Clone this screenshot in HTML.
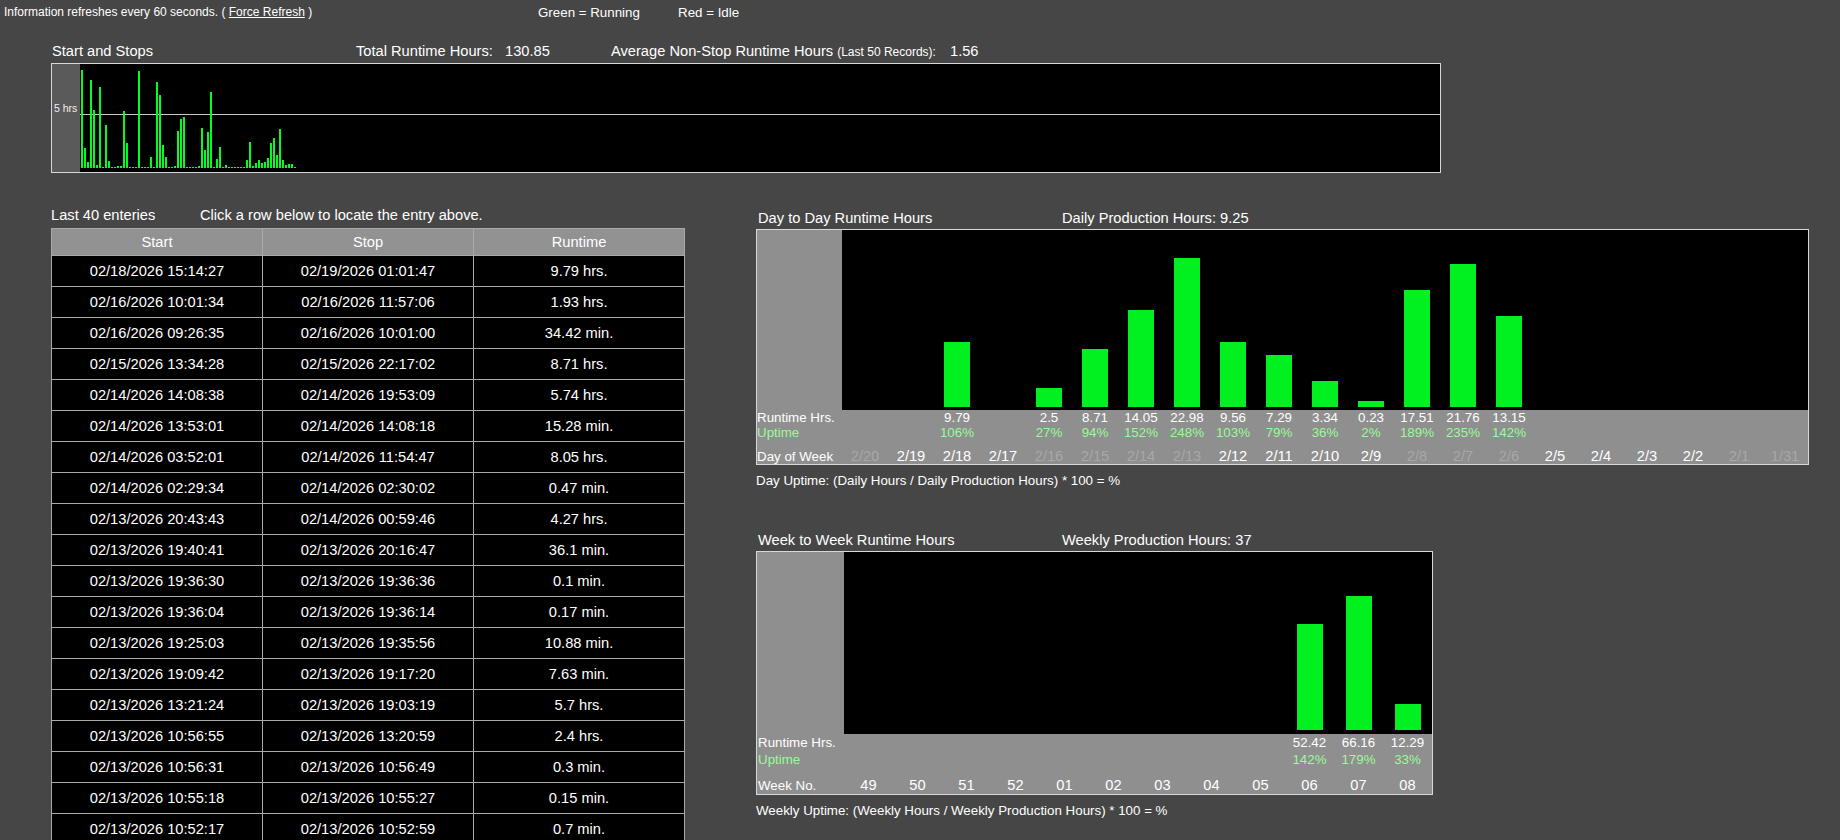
<!DOCTYPE html><html><head><meta charset="utf-8"><style>
html,body{margin:0;padding:0;background:#464646;width:1840px;height:840px;overflow:hidden;}
body{position:relative;font-family:"Liberation Sans",sans-serif;color:#fff;}
.t{position:absolute;white-space:nowrap;}
.b{position:absolute;}
</style></head><body>
<div class="t" style="left:4px;top:5.84px;font-size:12px;line-height:12px;color:#fff;">Information refreshes every 60 seconds. ( <span style="text-decoration:underline">Force Refresh</span> )</div>
<div class="t" style="left:538px;top:5.72px;font-size:13.33px;line-height:13.33px;color:#fff;">Green = Running</div>
<div class="t" style="left:678px;top:5.72px;font-size:13.33px;line-height:13.33px;color:#fff;">Red = Idle</div>
<div class="t" style="left:52px;top:43.58px;font-size:14.67px;line-height:14.67px;color:#fff;">Start and Stops</div>
<div class="t" style="left:356px;top:43.58px;font-size:14.67px;line-height:14.67px;color:#fff;">Total Runtime Hours:</div>
<div class="t" style="left:505px;top:43.58px;font-size:14.67px;line-height:14.67px;color:#fff;">130.85</div>
<div class="t" style="left:611px;top:43.58px;font-size:14.67px;line-height:14.67px;color:#fff;">Average Non-Stop Runtime Hours <span style="font-size:12px;letter-spacing:0">(Last 50 Records):</span></div>
<div class="t" style="left:950px;top:43.58px;font-size:14.67px;line-height:14.67px;color:#fff;">1.56</div>
<div class="b" style="left:51px;top:63px;width:1388px;height:108px;border:1px solid #d8d8d8;background:#000"></div>
<div class="b" style="left:52px;top:64px;width:28px;height:108px;background:#5a5a5a"></div>
<div class="b" style="left:80px;top:114px;width:1360px;height:1px;background:#c8c8c8"></div>
<div class="t" style="left:54px;top:103.11px;font-size:10.5px;line-height:10.5px;color:#f0f0f0;">5 hrs</div>
<div class="b" style="left:81px;top:70px;width:2px;height:98px;background:#00ff20"></div>
<div class="b" style="left:84px;top:148px;width:2px;height:20px;background:#00ff20"></div>
<div class="b" style="left:87px;top:162px;width:2px;height:6px;background:#00ff20"></div>
<div class="b" style="left:90px;top:80px;width:2px;height:88px;background:#00ff20"></div>
<div class="b" style="left:93px;top:110px;width:2px;height:58px;background:#00ff20"></div>
<div class="b" style="left:96px;top:165px;width:2px;height:3px;background:#00ff20"></div>
<div class="b" style="left:99px;top:87px;width:2px;height:81px;background:#00ff20"></div>
<div class="b" style="left:102px;top:167px;width:2px;height:1px;background:#00ff20"></div>
<div class="b" style="left:105px;top:125px;width:2px;height:43px;background:#00ff20"></div>
<div class="b" style="left:108px;top:161px;width:2px;height:7px;background:#00ff20"></div>
<div class="b" style="left:111px;top:167px;width:2px;height:1px;background:#00ff20"></div>
<div class="b" style="left:114px;top:167px;width:2px;height:1px;background:#00ff20"></div>
<div class="b" style="left:117px;top:166px;width:2px;height:2px;background:#00ff20"></div>
<div class="b" style="left:120px;top:166px;width:2px;height:2px;background:#00ff20"></div>
<div class="b" style="left:123px;top:111px;width:2px;height:57px;background:#00ff20"></div>
<div class="b" style="left:126px;top:143px;width:2px;height:25px;background:#00ff20"></div>
<div class="b" style="left:129px;top:167px;width:2px;height:1px;background:#00ff20"></div>
<div class="b" style="left:132px;top:167px;width:2px;height:1px;background:#00ff20"></div>
<div class="b" style="left:135px;top:167px;width:2px;height:1px;background:#00ff20"></div>
<div class="b" style="left:138px;top:71px;width:2px;height:97px;background:#00ff20"></div>
<div class="b" style="left:141px;top:167px;width:2px;height:1px;background:#00ff20"></div>
<div class="b" style="left:144px;top:167px;width:2px;height:1px;background:#00ff20"></div>
<div class="b" style="left:147px;top:167px;width:2px;height:1px;background:#00ff20"></div>
<div class="b" style="left:150px;top:157px;width:2px;height:11px;background:#00ff20"></div>
<div class="b" style="left:153px;top:167px;width:2px;height:1px;background:#00ff20"></div>
<div class="b" style="left:156px;top:82px;width:2px;height:86px;background:#00ff20"></div>
<div class="b" style="left:159px;top:95px;width:2px;height:73px;background:#00ff20"></div>
<div class="b" style="left:162px;top:145px;width:2px;height:23px;background:#00ff20"></div>
<div class="b" style="left:165px;top:157px;width:2px;height:11px;background:#00ff20"></div>
<div class="b" style="left:168px;top:167px;width:2px;height:1px;background:#00ff20"></div>
<div class="b" style="left:171px;top:167px;width:2px;height:1px;background:#00ff20"></div>
<div class="b" style="left:174px;top:166px;width:2px;height:2px;background:#00ff20"></div>
<div class="b" style="left:177px;top:131px;width:2px;height:37px;background:#00ff20"></div>
<div class="b" style="left:180px;top:119px;width:2px;height:49px;background:#00ff20"></div>
<div class="b" style="left:183px;top:117px;width:2px;height:51px;background:#00ff20"></div>
<div class="b" style="left:186px;top:167px;width:2px;height:1px;background:#00ff20"></div>
<div class="b" style="left:189px;top:167px;width:2px;height:1px;background:#00ff20"></div>
<div class="b" style="left:192px;top:167px;width:2px;height:1px;background:#00ff20"></div>
<div class="b" style="left:195px;top:167px;width:2px;height:1px;background:#00ff20"></div>
<div class="b" style="left:198px;top:166px;width:2px;height:2px;background:#00ff20"></div>
<div class="b" style="left:201px;top:128px;width:2px;height:40px;background:#00ff20"></div>
<div class="b" style="left:204px;top:150px;width:2px;height:18px;background:#00ff20"></div>
<div class="b" style="left:207px;top:132px;width:2px;height:36px;background:#00ff20"></div>
<div class="b" style="left:210px;top:92px;width:2px;height:76px;background:#00ff20"></div>
<div class="b" style="left:213px;top:167px;width:2px;height:1px;background:#00ff20"></div>
<div class="b" style="left:216px;top:159px;width:2px;height:9px;background:#00ff20"></div>
<div class="b" style="left:219px;top:147px;width:2px;height:21px;background:#00ff20"></div>
<div class="b" style="left:222px;top:167px;width:2px;height:1px;background:#00ff20"></div>
<div class="b" style="left:225px;top:165px;width:2px;height:3px;background:#00ff20"></div>
<div class="b" style="left:228px;top:167px;width:2px;height:1px;background:#00ff20"></div>
<div class="b" style="left:231px;top:167px;width:2px;height:1px;background:#00ff20"></div>
<div class="b" style="left:234px;top:167px;width:2px;height:1px;background:#00ff20"></div>
<div class="b" style="left:237px;top:167px;width:2px;height:1px;background:#00ff20"></div>
<div class="b" style="left:240px;top:167px;width:2px;height:1px;background:#00ff20"></div>
<div class="b" style="left:243px;top:167px;width:2px;height:1px;background:#00ff20"></div>
<div class="b" style="left:246px;top:160px;width:2px;height:8px;background:#00ff20"></div>
<div class="b" style="left:249px;top:142px;width:2px;height:26px;background:#00ff20"></div>
<div class="b" style="left:252px;top:166px;width:2px;height:2px;background:#00ff20"></div>
<div class="b" style="left:255px;top:163px;width:2px;height:5px;background:#00ff20"></div>
<div class="b" style="left:258px;top:160px;width:2px;height:8px;background:#00ff20"></div>
<div class="b" style="left:261px;top:163px;width:2px;height:5px;background:#00ff20"></div>
<div class="b" style="left:264px;top:162px;width:2px;height:6px;background:#00ff20"></div>
<div class="b" style="left:267px;top:158px;width:2px;height:10px;background:#00ff20"></div>
<div class="b" style="left:270px;top:143px;width:2px;height:25px;background:#00ff20"></div>
<div class="b" style="left:273px;top:138px;width:2px;height:30px;background:#00ff20"></div>
<div class="b" style="left:276px;top:155px;width:2px;height:13px;background:#00ff20"></div>
<div class="b" style="left:279px;top:129px;width:2px;height:39px;background:#00ff20"></div>
<div class="b" style="left:282px;top:160px;width:2px;height:8px;background:#00ff20"></div>
<div class="b" style="left:285px;top:165px;width:2px;height:3px;background:#00ff20"></div>
<div class="b" style="left:288px;top:164px;width:2px;height:4px;background:#00ff20"></div>
<div class="b" style="left:291px;top:164px;width:2px;height:4px;background:#00ff20"></div>
<div class="b" style="left:294px;top:167px;width:2px;height:1px;background:#00ff20"></div>
<div class="t" style="left:51px;top:207.58px;font-size:14.67px;line-height:14.67px;color:#fff;">Last 40 enteries</div>
<div class="t" style="left:200px;top:207.58px;font-size:14.67px;line-height:14.67px;color:#fff;">Click a row below to locate the entry above.</div>
<div class="b" style="left:51px;top:228px;width:632px;height:616px;border:1px solid #a9a9a9;background:#000"></div>
<div class="b" style="left:52px;top:229px;width:632px;height:26px;background:#929292"></div>
<div class="b" style="left:262px;top:229px;width:1px;height:616px;background:#a9a9a9"></div>
<div class="b" style="left:473px;top:229px;width:1px;height:616px;background:#a9a9a9"></div>
<div class="b" style="left:52px;top:255px;width:632px;height:1px;background:#a9a9a9"></div>
<div class="b" style="left:52px;top:286px;width:632px;height:1px;background:#a9a9a9"></div>
<div class="b" style="left:52px;top:317px;width:632px;height:1px;background:#a9a9a9"></div>
<div class="b" style="left:52px;top:348px;width:632px;height:1px;background:#a9a9a9"></div>
<div class="b" style="left:52px;top:379px;width:632px;height:1px;background:#a9a9a9"></div>
<div class="b" style="left:52px;top:410px;width:632px;height:1px;background:#a9a9a9"></div>
<div class="b" style="left:52px;top:441px;width:632px;height:1px;background:#a9a9a9"></div>
<div class="b" style="left:52px;top:472px;width:632px;height:1px;background:#a9a9a9"></div>
<div class="b" style="left:52px;top:503px;width:632px;height:1px;background:#a9a9a9"></div>
<div class="b" style="left:52px;top:534px;width:632px;height:1px;background:#a9a9a9"></div>
<div class="b" style="left:52px;top:565px;width:632px;height:1px;background:#a9a9a9"></div>
<div class="b" style="left:52px;top:596px;width:632px;height:1px;background:#a9a9a9"></div>
<div class="b" style="left:52px;top:627px;width:632px;height:1px;background:#a9a9a9"></div>
<div class="b" style="left:52px;top:658px;width:632px;height:1px;background:#a9a9a9"></div>
<div class="b" style="left:52px;top:689px;width:632px;height:1px;background:#a9a9a9"></div>
<div class="b" style="left:52px;top:720px;width:632px;height:1px;background:#a9a9a9"></div>
<div class="b" style="left:52px;top:751px;width:632px;height:1px;background:#a9a9a9"></div>
<div class="b" style="left:52px;top:782px;width:632px;height:1px;background:#a9a9a9"></div>
<div class="b" style="left:52px;top:813px;width:632px;height:1px;background:#a9a9a9"></div>
<div class="b" style="left:52px;top:844px;width:632px;height:1px;background:#a9a9a9"></div>
<div class="t" style="left:52px;top:234.58px;font-size:14.67px;line-height:14.67px;color:#fff;width:210px;text-align:center;">Start</div>
<div class="t" style="left:263px;top:234.58px;font-size:14.67px;line-height:14.67px;color:#fff;width:210px;text-align:center;">Stop</div>
<div class="t" style="left:474px;top:234.58px;font-size:14.67px;line-height:14.67px;color:#fff;width:210px;text-align:center;">Runtime</div>
<div class="t" style="left:52px;top:263.58px;font-size:14.67px;line-height:14.67px;color:#fff;width:210px;text-align:center;">02/18/2026 15:14:27</div>
<div class="t" style="left:263px;top:263.58px;font-size:14.67px;line-height:14.67px;color:#fff;width:210px;text-align:center;">02/19/2026 01:01:47</div>
<div class="t" style="left:474px;top:263.58px;font-size:14.67px;line-height:14.67px;color:#fff;width:210px;text-align:center;">9.79 hrs.</div>
<div class="t" style="left:52px;top:294.58px;font-size:14.67px;line-height:14.67px;color:#fff;width:210px;text-align:center;">02/16/2026 10:01:34</div>
<div class="t" style="left:263px;top:294.58px;font-size:14.67px;line-height:14.67px;color:#fff;width:210px;text-align:center;">02/16/2026 11:57:06</div>
<div class="t" style="left:474px;top:294.58px;font-size:14.67px;line-height:14.67px;color:#fff;width:210px;text-align:center;">1.93 hrs.</div>
<div class="t" style="left:52px;top:325.58px;font-size:14.67px;line-height:14.67px;color:#fff;width:210px;text-align:center;">02/16/2026 09:26:35</div>
<div class="t" style="left:263px;top:325.58px;font-size:14.67px;line-height:14.67px;color:#fff;width:210px;text-align:center;">02/16/2026 10:01:00</div>
<div class="t" style="left:474px;top:325.58px;font-size:14.67px;line-height:14.67px;color:#fff;width:210px;text-align:center;">34.42 min.</div>
<div class="t" style="left:52px;top:356.58px;font-size:14.67px;line-height:14.67px;color:#fff;width:210px;text-align:center;">02/15/2026 13:34:28</div>
<div class="t" style="left:263px;top:356.58px;font-size:14.67px;line-height:14.67px;color:#fff;width:210px;text-align:center;">02/15/2026 22:17:02</div>
<div class="t" style="left:474px;top:356.58px;font-size:14.67px;line-height:14.67px;color:#fff;width:210px;text-align:center;">8.71 hrs.</div>
<div class="t" style="left:52px;top:387.58px;font-size:14.67px;line-height:14.67px;color:#fff;width:210px;text-align:center;">02/14/2026 14:08:38</div>
<div class="t" style="left:263px;top:387.58px;font-size:14.67px;line-height:14.67px;color:#fff;width:210px;text-align:center;">02/14/2026 19:53:09</div>
<div class="t" style="left:474px;top:387.58px;font-size:14.67px;line-height:14.67px;color:#fff;width:210px;text-align:center;">5.74 hrs.</div>
<div class="t" style="left:52px;top:418.58px;font-size:14.67px;line-height:14.67px;color:#fff;width:210px;text-align:center;">02/14/2026 13:53:01</div>
<div class="t" style="left:263px;top:418.58px;font-size:14.67px;line-height:14.67px;color:#fff;width:210px;text-align:center;">02/14/2026 14:08:18</div>
<div class="t" style="left:474px;top:418.58px;font-size:14.67px;line-height:14.67px;color:#fff;width:210px;text-align:center;">15.28 min.</div>
<div class="t" style="left:52px;top:449.58px;font-size:14.67px;line-height:14.67px;color:#fff;width:210px;text-align:center;">02/14/2026 03:52:01</div>
<div class="t" style="left:263px;top:449.58px;font-size:14.67px;line-height:14.67px;color:#fff;width:210px;text-align:center;">02/14/2026 11:54:47</div>
<div class="t" style="left:474px;top:449.58px;font-size:14.67px;line-height:14.67px;color:#fff;width:210px;text-align:center;">8.05 hrs.</div>
<div class="t" style="left:52px;top:480.58px;font-size:14.67px;line-height:14.67px;color:#fff;width:210px;text-align:center;">02/14/2026 02:29:34</div>
<div class="t" style="left:263px;top:480.58px;font-size:14.67px;line-height:14.67px;color:#fff;width:210px;text-align:center;">02/14/2026 02:30:02</div>
<div class="t" style="left:474px;top:480.58px;font-size:14.67px;line-height:14.67px;color:#fff;width:210px;text-align:center;">0.47 min.</div>
<div class="t" style="left:52px;top:511.58px;font-size:14.67px;line-height:14.67px;color:#fff;width:210px;text-align:center;">02/13/2026 20:43:43</div>
<div class="t" style="left:263px;top:511.58px;font-size:14.67px;line-height:14.67px;color:#fff;width:210px;text-align:center;">02/14/2026 00:59:46</div>
<div class="t" style="left:474px;top:511.58px;font-size:14.67px;line-height:14.67px;color:#fff;width:210px;text-align:center;">4.27 hrs.</div>
<div class="t" style="left:52px;top:542.58px;font-size:14.67px;line-height:14.67px;color:#fff;width:210px;text-align:center;">02/13/2026 19:40:41</div>
<div class="t" style="left:263px;top:542.58px;font-size:14.67px;line-height:14.67px;color:#fff;width:210px;text-align:center;">02/13/2026 20:16:47</div>
<div class="t" style="left:474px;top:542.58px;font-size:14.67px;line-height:14.67px;color:#fff;width:210px;text-align:center;">36.1 min.</div>
<div class="t" style="left:52px;top:573.58px;font-size:14.67px;line-height:14.67px;color:#fff;width:210px;text-align:center;">02/13/2026 19:36:30</div>
<div class="t" style="left:263px;top:573.58px;font-size:14.67px;line-height:14.67px;color:#fff;width:210px;text-align:center;">02/13/2026 19:36:36</div>
<div class="t" style="left:474px;top:573.58px;font-size:14.67px;line-height:14.67px;color:#fff;width:210px;text-align:center;">0.1 min.</div>
<div class="t" style="left:52px;top:604.58px;font-size:14.67px;line-height:14.67px;color:#fff;width:210px;text-align:center;">02/13/2026 19:36:04</div>
<div class="t" style="left:263px;top:604.58px;font-size:14.67px;line-height:14.67px;color:#fff;width:210px;text-align:center;">02/13/2026 19:36:14</div>
<div class="t" style="left:474px;top:604.58px;font-size:14.67px;line-height:14.67px;color:#fff;width:210px;text-align:center;">0.17 min.</div>
<div class="t" style="left:52px;top:635.58px;font-size:14.67px;line-height:14.67px;color:#fff;width:210px;text-align:center;">02/13/2026 19:25:03</div>
<div class="t" style="left:263px;top:635.58px;font-size:14.67px;line-height:14.67px;color:#fff;width:210px;text-align:center;">02/13/2026 19:35:56</div>
<div class="t" style="left:474px;top:635.58px;font-size:14.67px;line-height:14.67px;color:#fff;width:210px;text-align:center;">10.88 min.</div>
<div class="t" style="left:52px;top:666.58px;font-size:14.67px;line-height:14.67px;color:#fff;width:210px;text-align:center;">02/13/2026 19:09:42</div>
<div class="t" style="left:263px;top:666.58px;font-size:14.67px;line-height:14.67px;color:#fff;width:210px;text-align:center;">02/13/2026 19:17:20</div>
<div class="t" style="left:474px;top:666.58px;font-size:14.67px;line-height:14.67px;color:#fff;width:210px;text-align:center;">7.63 min.</div>
<div class="t" style="left:52px;top:697.58px;font-size:14.67px;line-height:14.67px;color:#fff;width:210px;text-align:center;">02/13/2026 13:21:24</div>
<div class="t" style="left:263px;top:697.58px;font-size:14.67px;line-height:14.67px;color:#fff;width:210px;text-align:center;">02/13/2026 19:03:19</div>
<div class="t" style="left:474px;top:697.58px;font-size:14.67px;line-height:14.67px;color:#fff;width:210px;text-align:center;">5.7 hrs.</div>
<div class="t" style="left:52px;top:728.58px;font-size:14.67px;line-height:14.67px;color:#fff;width:210px;text-align:center;">02/13/2026 10:56:55</div>
<div class="t" style="left:263px;top:728.58px;font-size:14.67px;line-height:14.67px;color:#fff;width:210px;text-align:center;">02/13/2026 13:20:59</div>
<div class="t" style="left:474px;top:728.58px;font-size:14.67px;line-height:14.67px;color:#fff;width:210px;text-align:center;">2.4 hrs.</div>
<div class="t" style="left:52px;top:759.58px;font-size:14.67px;line-height:14.67px;color:#fff;width:210px;text-align:center;">02/13/2026 10:56:31</div>
<div class="t" style="left:263px;top:759.58px;font-size:14.67px;line-height:14.67px;color:#fff;width:210px;text-align:center;">02/13/2026 10:56:49</div>
<div class="t" style="left:474px;top:759.58px;font-size:14.67px;line-height:14.67px;color:#fff;width:210px;text-align:center;">0.3 min.</div>
<div class="t" style="left:52px;top:790.58px;font-size:14.67px;line-height:14.67px;color:#fff;width:210px;text-align:center;">02/13/2026 10:55:18</div>
<div class="t" style="left:263px;top:790.58px;font-size:14.67px;line-height:14.67px;color:#fff;width:210px;text-align:center;">02/13/2026 10:55:27</div>
<div class="t" style="left:474px;top:790.58px;font-size:14.67px;line-height:14.67px;color:#fff;width:210px;text-align:center;">0.15 min.</div>
<div class="t" style="left:52px;top:821.58px;font-size:14.67px;line-height:14.67px;color:#fff;width:210px;text-align:center;">02/13/2026 10:52:17</div>
<div class="t" style="left:263px;top:821.58px;font-size:14.67px;line-height:14.67px;color:#fff;width:210px;text-align:center;">02/13/2026 10:52:59</div>
<div class="t" style="left:474px;top:821.58px;font-size:14.67px;line-height:14.67px;color:#fff;width:210px;text-align:center;">0.7 min.</div>
<div class="t" style="left:758px;top:210.58px;font-size:14.67px;line-height:14.67px;color:#fff;">Day to Day Runtime Hours</div>
<div class="t" style="left:1062px;top:210.58px;font-size:14.67px;line-height:14.67px;color:#fff;">Daily Production Hours: 9.25</div>
<div class="b" style="left:756px;top:229px;width:1051px;height:234px;border:1px solid #d8d8d8;background:#8f8f8f"></div>
<div class="b" style="left:842px;top:230px;width:966px;height:180px;background:#000"></div>
<div class="t" style="left:757px;top:410.72px;font-size:13.33px;line-height:13.33px;color:#fff;">Runtime Hrs.</div>
<div class="t" style="left:757px;top:425.72px;font-size:13.33px;line-height:13.33px;color:#98fb98;">Uptime</div>
<div class="t" style="left:757px;top:449.72px;font-size:13.33px;line-height:13.33px;color:#fff;">Day of Week</div>
<div class="t" style="left:842px;top:448.58px;font-size:14.67px;line-height:14.67px;color:#a8a8a8;width:46px;text-align:center;">2/20</div>
<div class="t" style="left:888px;top:448.58px;font-size:14.67px;line-height:14.67px;color:#fff;width:46px;text-align:center;">2/19</div>
<div class="t" style="left:934px;top:448.58px;font-size:14.67px;line-height:14.67px;color:#fff;width:46px;text-align:center;">2/18</div>
<div class="b" style="left:944px;top:342px;width:26px;height:65px;background:#00f020"></div>
<div class="t" style="left:934px;top:410.72px;font-size:13.33px;line-height:13.33px;color:#fff;width:46px;text-align:center;">9.79</div>
<div class="t" style="left:934px;top:425.72px;font-size:13.33px;line-height:13.33px;color:#98fb98;width:46px;text-align:center;">106%</div>
<div class="t" style="left:980px;top:448.58px;font-size:14.67px;line-height:14.67px;color:#fff;width:46px;text-align:center;">2/17</div>
<div class="t" style="left:1026px;top:448.58px;font-size:14.67px;line-height:14.67px;color:#a8a8a8;width:46px;text-align:center;">2/16</div>
<div class="b" style="left:1036px;top:388px;width:26px;height:19px;background:#00f020"></div>
<div class="t" style="left:1026px;top:410.72px;font-size:13.33px;line-height:13.33px;color:#fff;width:46px;text-align:center;">2.5</div>
<div class="t" style="left:1026px;top:425.72px;font-size:13.33px;line-height:13.33px;color:#98fb98;width:46px;text-align:center;">27%</div>
<div class="t" style="left:1072px;top:448.58px;font-size:14.67px;line-height:14.67px;color:#a8a8a8;width:46px;text-align:center;">2/15</div>
<div class="b" style="left:1082px;top:349px;width:26px;height:58px;background:#00f020"></div>
<div class="t" style="left:1072px;top:410.72px;font-size:13.33px;line-height:13.33px;color:#fff;width:46px;text-align:center;">8.71</div>
<div class="t" style="left:1072px;top:425.72px;font-size:13.33px;line-height:13.33px;color:#98fb98;width:46px;text-align:center;">94%</div>
<div class="t" style="left:1118px;top:448.58px;font-size:14.67px;line-height:14.67px;color:#a8a8a8;width:46px;text-align:center;">2/14</div>
<div class="b" style="left:1128px;top:310px;width:26px;height:97px;background:#00f020"></div>
<div class="t" style="left:1118px;top:410.72px;font-size:13.33px;line-height:13.33px;color:#fff;width:46px;text-align:center;">14.05</div>
<div class="t" style="left:1118px;top:425.72px;font-size:13.33px;line-height:13.33px;color:#98fb98;width:46px;text-align:center;">152%</div>
<div class="t" style="left:1164px;top:448.58px;font-size:14.67px;line-height:14.67px;color:#a8a8a8;width:46px;text-align:center;">2/13</div>
<div class="b" style="left:1174px;top:258px;width:26px;height:149px;background:#00f020"></div>
<div class="t" style="left:1164px;top:410.72px;font-size:13.33px;line-height:13.33px;color:#fff;width:46px;text-align:center;">22.98</div>
<div class="t" style="left:1164px;top:425.72px;font-size:13.33px;line-height:13.33px;color:#98fb98;width:46px;text-align:center;">248%</div>
<div class="t" style="left:1210px;top:448.58px;font-size:14.67px;line-height:14.67px;color:#fff;width:46px;text-align:center;">2/12</div>
<div class="b" style="left:1220px;top:342px;width:26px;height:65px;background:#00f020"></div>
<div class="t" style="left:1210px;top:410.72px;font-size:13.33px;line-height:13.33px;color:#fff;width:46px;text-align:center;">9.56</div>
<div class="t" style="left:1210px;top:425.72px;font-size:13.33px;line-height:13.33px;color:#98fb98;width:46px;text-align:center;">103%</div>
<div class="t" style="left:1256px;top:448.58px;font-size:14.67px;line-height:14.67px;color:#fff;width:46px;text-align:center;">2/11</div>
<div class="b" style="left:1266px;top:355px;width:26px;height:52px;background:#00f020"></div>
<div class="t" style="left:1256px;top:410.72px;font-size:13.33px;line-height:13.33px;color:#fff;width:46px;text-align:center;">7.29</div>
<div class="t" style="left:1256px;top:425.72px;font-size:13.33px;line-height:13.33px;color:#98fb98;width:46px;text-align:center;">79%</div>
<div class="t" style="left:1302px;top:448.58px;font-size:14.67px;line-height:14.67px;color:#fff;width:46px;text-align:center;">2/10</div>
<div class="b" style="left:1312px;top:381px;width:26px;height:26px;background:#00f020"></div>
<div class="t" style="left:1302px;top:410.72px;font-size:13.33px;line-height:13.33px;color:#fff;width:46px;text-align:center;">3.34</div>
<div class="t" style="left:1302px;top:425.72px;font-size:13.33px;line-height:13.33px;color:#98fb98;width:46px;text-align:center;">36%</div>
<div class="t" style="left:1348px;top:448.58px;font-size:14.67px;line-height:14.67px;color:#fff;width:46px;text-align:center;">2/9</div>
<div class="b" style="left:1358px;top:401px;width:26px;height:6px;background:#00f020"></div>
<div class="t" style="left:1348px;top:410.72px;font-size:13.33px;line-height:13.33px;color:#fff;width:46px;text-align:center;">0.23</div>
<div class="t" style="left:1348px;top:425.72px;font-size:13.33px;line-height:13.33px;color:#98fb98;width:46px;text-align:center;">2%</div>
<div class="t" style="left:1394px;top:448.58px;font-size:14.67px;line-height:14.67px;color:#a8a8a8;width:46px;text-align:center;">2/8</div>
<div class="b" style="left:1404px;top:290px;width:26px;height:117px;background:#00f020"></div>
<div class="t" style="left:1394px;top:410.72px;font-size:13.33px;line-height:13.33px;color:#fff;width:46px;text-align:center;">17.51</div>
<div class="t" style="left:1394px;top:425.72px;font-size:13.33px;line-height:13.33px;color:#98fb98;width:46px;text-align:center;">189%</div>
<div class="t" style="left:1440px;top:448.58px;font-size:14.67px;line-height:14.67px;color:#a8a8a8;width:46px;text-align:center;">2/7</div>
<div class="b" style="left:1450px;top:264px;width:26px;height:143px;background:#00f020"></div>
<div class="t" style="left:1440px;top:410.72px;font-size:13.33px;line-height:13.33px;color:#fff;width:46px;text-align:center;">21.76</div>
<div class="t" style="left:1440px;top:425.72px;font-size:13.33px;line-height:13.33px;color:#98fb98;width:46px;text-align:center;">235%</div>
<div class="t" style="left:1486px;top:448.58px;font-size:14.67px;line-height:14.67px;color:#a8a8a8;width:46px;text-align:center;">2/6</div>
<div class="b" style="left:1496px;top:316px;width:26px;height:91px;background:#00f020"></div>
<div class="t" style="left:1486px;top:410.72px;font-size:13.33px;line-height:13.33px;color:#fff;width:46px;text-align:center;">13.15</div>
<div class="t" style="left:1486px;top:425.72px;font-size:13.33px;line-height:13.33px;color:#98fb98;width:46px;text-align:center;">142%</div>
<div class="t" style="left:1532px;top:448.58px;font-size:14.67px;line-height:14.67px;color:#fff;width:46px;text-align:center;">2/5</div>
<div class="t" style="left:1578px;top:448.58px;font-size:14.67px;line-height:14.67px;color:#fff;width:46px;text-align:center;">2/4</div>
<div class="t" style="left:1624px;top:448.58px;font-size:14.67px;line-height:14.67px;color:#fff;width:46px;text-align:center;">2/3</div>
<div class="t" style="left:1670px;top:448.58px;font-size:14.67px;line-height:14.67px;color:#fff;width:46px;text-align:center;">2/2</div>
<div class="t" style="left:1716px;top:448.58px;font-size:14.67px;line-height:14.67px;color:#a8a8a8;width:46px;text-align:center;">2/1</div>
<div class="t" style="left:1762px;top:448.58px;font-size:14.67px;line-height:14.67px;color:#a8a8a8;width:46px;text-align:center;">1/31</div>
<div class="t" style="left:756px;top:473.72px;font-size:13.33px;line-height:13.33px;color:#fff;">Day Uptime: (Daily Hours / Daily Production Hours) * 100 = %</div>
<div class="t" style="left:758px;top:532.58px;font-size:14.67px;line-height:14.67px;color:#fff;">Week to Week Runtime Hours</div>
<div class="t" style="left:1062px;top:532.58px;font-size:14.67px;line-height:14.67px;color:#fff;">Weekly Production Hours: 37</div>
<div class="b" style="left:756px;top:551px;width:675px;height:242px;border:1px solid #d8d8d8;background:#8f8f8f"></div>
<div class="b" style="left:844px;top:552px;width:588px;height:182px;background:#000"></div>
<div class="t" style="left:758px;top:735.72px;font-size:13.33px;line-height:13.33px;color:#fff;">Runtime Hrs.</div>
<div class="t" style="left:758px;top:752.72px;font-size:13.33px;line-height:13.33px;color:#98fb98;">Uptime</div>
<div class="t" style="left:758px;top:778.72px;font-size:13.33px;line-height:13.33px;color:#fff;">Week No.</div>
<div class="t" style="left:844px;top:777.58px;font-size:14.67px;line-height:14.67px;color:#fff;width:49px;text-align:center;">49</div>
<div class="t" style="left:893px;top:777.58px;font-size:14.67px;line-height:14.67px;color:#fff;width:49px;text-align:center;">50</div>
<div class="t" style="left:942px;top:777.58px;font-size:14.67px;line-height:14.67px;color:#fff;width:49px;text-align:center;">51</div>
<div class="t" style="left:991px;top:777.58px;font-size:14.67px;line-height:14.67px;color:#fff;width:49px;text-align:center;">52</div>
<div class="t" style="left:1040px;top:777.58px;font-size:14.67px;line-height:14.67px;color:#fff;width:49px;text-align:center;">01</div>
<div class="t" style="left:1089px;top:777.58px;font-size:14.67px;line-height:14.67px;color:#fff;width:49px;text-align:center;">02</div>
<div class="t" style="left:1138px;top:777.58px;font-size:14.67px;line-height:14.67px;color:#fff;width:49px;text-align:center;">03</div>
<div class="t" style="left:1187px;top:777.58px;font-size:14.67px;line-height:14.67px;color:#fff;width:49px;text-align:center;">04</div>
<div class="t" style="left:1236px;top:777.58px;font-size:14.67px;line-height:14.67px;color:#fff;width:49px;text-align:center;">05</div>
<div class="t" style="left:1285px;top:777.58px;font-size:14.67px;line-height:14.67px;color:#fff;width:49px;text-align:center;">06</div>
<div class="b" style="left:1297px;top:624px;width:26px;height:106px;background:#00f020"></div>
<div class="t" style="left:1285px;top:735.72px;font-size:13.33px;line-height:13.33px;color:#fff;width:49px;text-align:center;">52.42</div>
<div class="t" style="left:1285px;top:752.72px;font-size:13.33px;line-height:13.33px;color:#98fb98;width:49px;text-align:center;">142%</div>
<div class="t" style="left:1334px;top:777.58px;font-size:14.67px;line-height:14.67px;color:#fff;width:49px;text-align:center;">07</div>
<div class="b" style="left:1346px;top:596px;width:26px;height:134px;background:#00f020"></div>
<div class="t" style="left:1334px;top:735.72px;font-size:13.33px;line-height:13.33px;color:#fff;width:49px;text-align:center;">66.16</div>
<div class="t" style="left:1334px;top:752.72px;font-size:13.33px;line-height:13.33px;color:#98fb98;width:49px;text-align:center;">179%</div>
<div class="t" style="left:1383px;top:777.58px;font-size:14.67px;line-height:14.67px;color:#fff;width:49px;text-align:center;">08</div>
<div class="b" style="left:1395px;top:704px;width:26px;height:26px;background:#00f020"></div>
<div class="t" style="left:1383px;top:735.72px;font-size:13.33px;line-height:13.33px;color:#fff;width:49px;text-align:center;">12.29</div>
<div class="t" style="left:1383px;top:752.72px;font-size:13.33px;line-height:13.33px;color:#98fb98;width:49px;text-align:center;">33%</div>
<div class="t" style="left:756px;top:803.72px;font-size:13.33px;line-height:13.33px;color:#fff;">Weekly Uptime: (Weekly Hours / Weekly Production Hours) * 100 = %</div>
</body></html>
